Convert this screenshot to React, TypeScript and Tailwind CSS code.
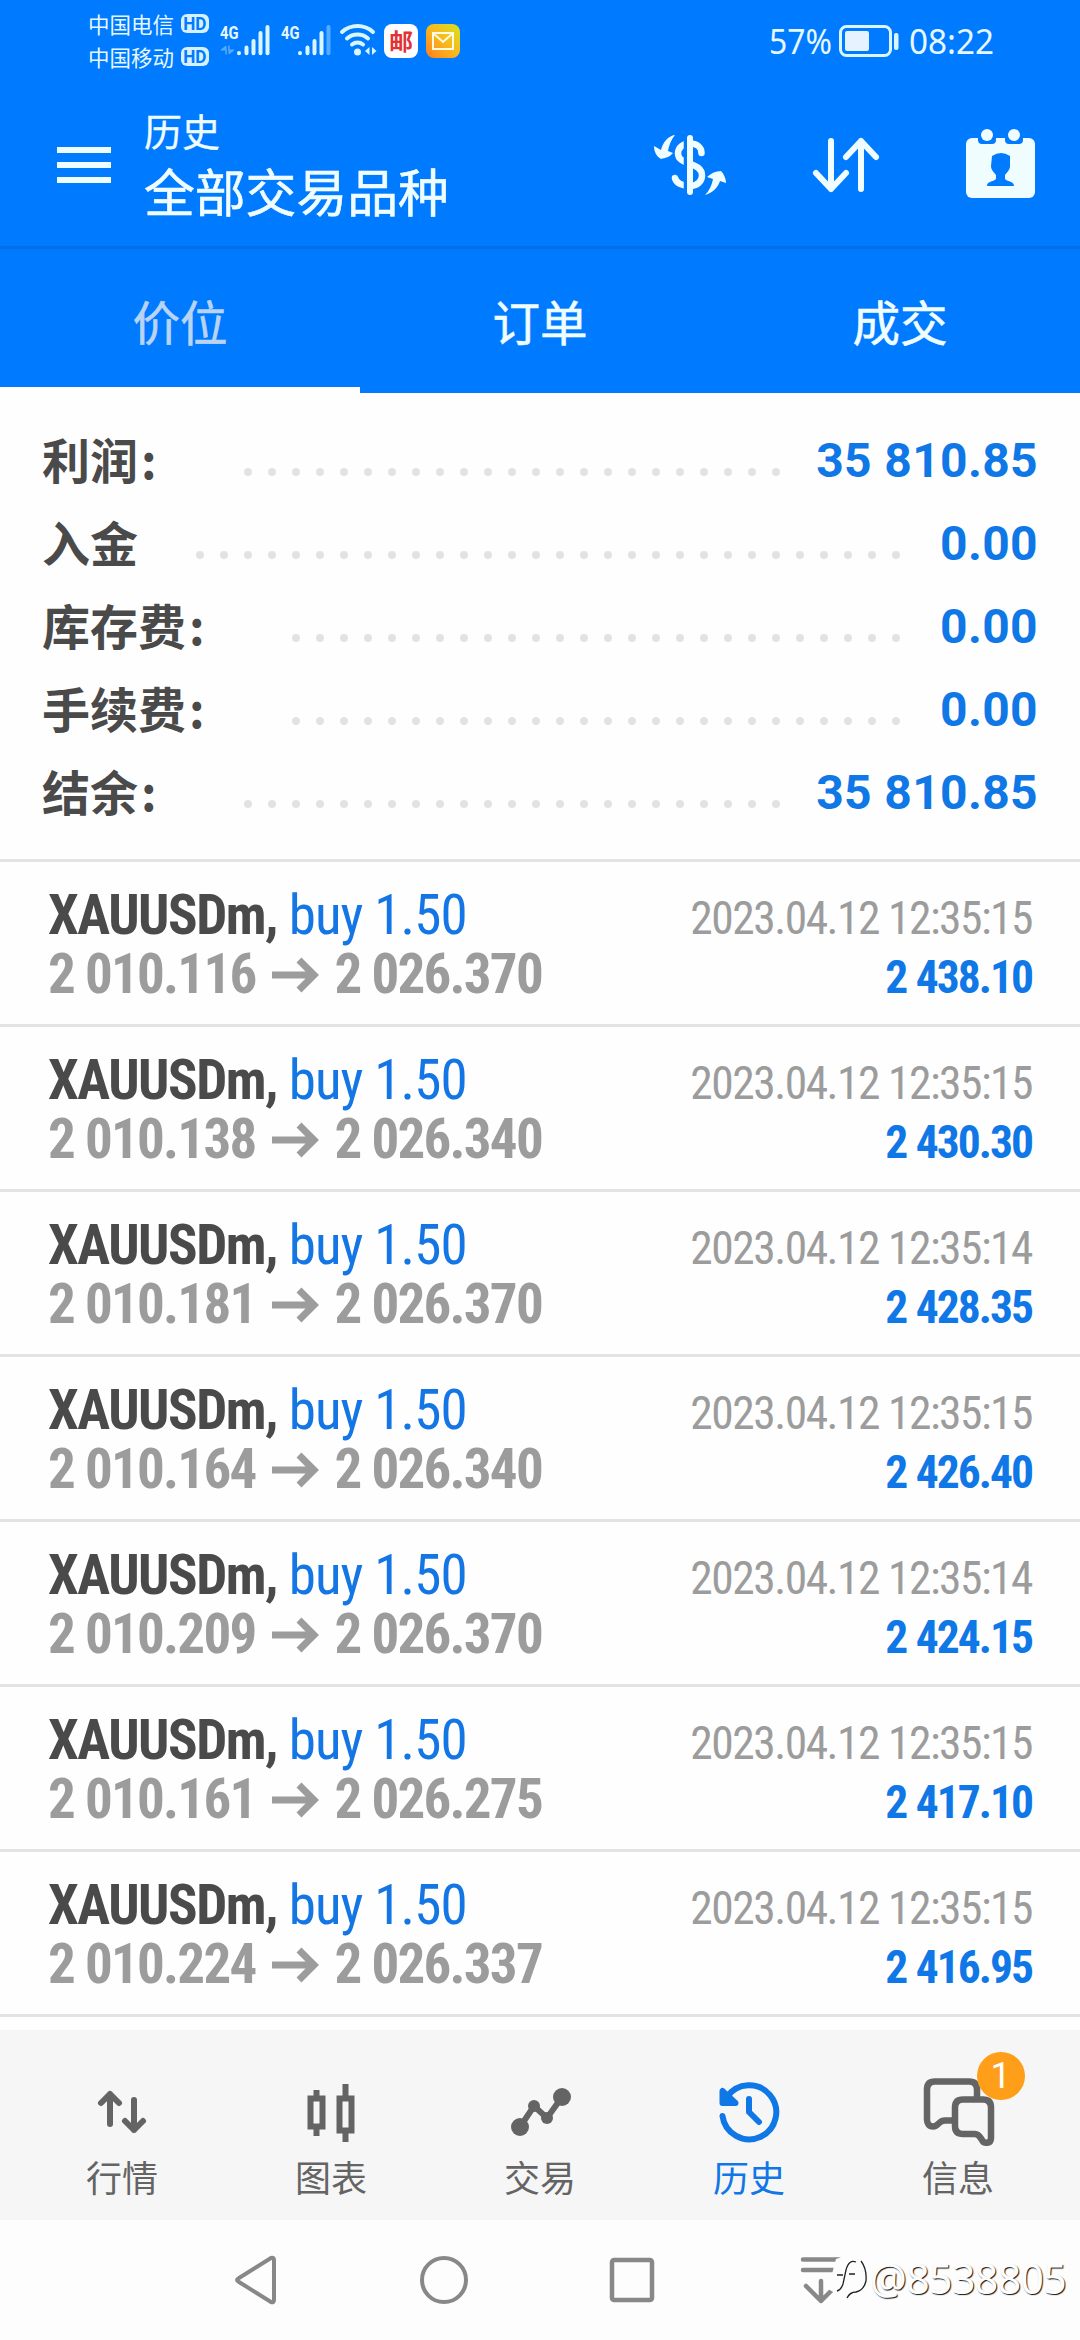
import React from "react";

const summary = [
  { label: "利润", colon: true, value: "35 810.85", dots: "w-[552px] mr-[292px]" },
  { label: "入金", colon: false, value: "0.00", dots: "w-[720px] mr-[172px]" },
  { label: "库存费", colon: true, value: "0.00", dots: "w-[624px] mr-[172px]" },
  { label: "手续费", colon: true, value: "0.00", dots: "w-[624px] mr-[172px]" },
  { label: "结余", colon: true, value: "35 810.85", dots: "w-[552px] mr-[292px]" },
];

const trades = [
  ["2 010.116", "2 026.370", "2023.04.12 12:35:15", "2 438.10"],
  ["2 010.138", "2 026.340", "2023.04.12 12:35:15", "2 430.30"],
  ["2 010.181", "2 026.370", "2023.04.12 12:35:14", "2 428.35"],
  ["2 010.164", "2 026.340", "2023.04.12 12:35:15", "2 426.40"],
  ["2 010.209", "2 026.370", "2023.04.12 12:35:14", "2 424.15"],
  ["2 010.161", "2 026.275", "2023.04.12 12:35:15", "2 417.10"],
  ["2 010.224", "2 026.337", "2023.04.12 12:35:15", "2 416.95"],
];

function Hd() {
  return (
    <span className="flex h-[19px] w-[28px] items-center justify-center rounded-[6px] bg-[#d5f1ff] font-['Roboto'] text-[19px] leading-none font-bold text-[#007aff]">
      <span className="scale-x-90">HD</span>
    </span>
  );
}

function Signal({ weak }: { weak?: boolean }) {
  return (
    <svg width="50" height="34" viewBox="0 0 50 34" fill="none" stroke="#d9f6ff" strokeWidth="4" strokeLinecap="round">
      <path d="M19 29v.2M26.500 23.500v5.700M33.500 17v12.200M40.500 9v20.200" />
      <path d="M47.500 3v26.200" opacity={weak ? 0.4 : 1} />
      {!weak && <path d="M6 30v-8l-5 4h5zM9 22v8l5-4h-5z" fill="#d9f6ff" strokeWidth="1" opacity=".4" />}
    </svg>
  );
}

function StatusBar() {
  return (
    <div className="flex h-[80px] items-start pl-[88px] text-[#e6f8ff]">
      <div className="flex w-[121px] flex-col pt-[7px] font-['Noto_Sans_CJK_SC',sans-serif] text-[21.500px] leading-[33px]">
        <div className="flex items-center justify-between whitespace-nowrap">中国电信<Hd /></div>
        <div className="flex items-center justify-between whitespace-nowrap">中国移动<Hd /></div>
      </div>
      <div className="relative ml-[11px] mt-[24px] w-[61px]">
        <span className="absolute top-0 left-0 origin-left scale-x-82 font-['Roboto'] text-[18px] leading-[18px] font-bold">4G</span>
        <Signal />
      </div>
      <div className="relative mt-[24px] w-[58px]">
        <span className="absolute top-0 left-0 origin-left scale-x-82 font-['Roboto'] text-[18px] leading-[18px] font-bold">4G</span>
        <Signal weak />
      </div>
      <svg className="mt-[22px]" width="42" height="36" viewBox="0 0 42 36" fill="none" stroke="#d9f6ff" strokeLinecap="round">
        <path d="M3 10a23 23 0 0 1 31 0M8 16.500a16 16 0 0 1 21 0M13 22.500a9 9 0 0 1 11 0" strokeWidth="4" />
        <circle cx="18.500" cy="30" r="3.500" fill="#d9f6ff" stroke="none" />
        <path d="M30.500 25v8l-4.500-4zM33 25v8l4.500-4z" fill="#d9f6ff" stroke="none" />
      </svg>
      <div className="mt-[24px] ml-[3px] flex h-[34px] w-[34px] items-center justify-center rounded-[8px] bg-white">
        <span className="-translate-y-px scale-y-95 font-['Noto_Sans_CJK_SC',sans-serif] text-[24px] leading-none font-bold text-[#e23236]">邮</span>
      </div>
      <div className="mt-[24px] ml-[8px] flex h-[34px] w-[34px] items-center justify-center rounded-[8px] bg-linear-to-tr from-[#ff7a1e] via-[#f8b81d] to-[#d2e21f]">
        <svg width="22" height="18" viewBox="0 0 22 18" fill="none" stroke="#fffbe0" strokeWidth="2"><path d="M1 1h20v16H1zM2 2l9 8 9-8" /></svg>
      </div>
      <div className="ml-auto flex items-center pt-[21px] pr-[87px] font-['Noto_Sans'] text-[35px] leading-[40px]">
        <span className="inline-block w-[67px] origin-left scale-x-91 whitespace-nowrap">57%</span>
        <svg className="ml-[3px]" width="61" height="34" viewBox="0 0 61 34" fill="none">
          <rect x="1.500" y="2.500" width="50" height="29" rx="6" stroke="#d9f6ff" strokeWidth="3" />
          <rect x="6" y="7" width="24" height="20" rx="2" fill="#e6f2ff" />
          <rect x="55" y="9" width="4.500" height="17" rx="2" fill="#d9f6ff" />
        </svg>
        <span className="ml-[9px] inline-block w-[84px] origin-left scale-x-95 whitespace-nowrap">08:22</span>
      </div>
    </div>
  );
}

function Header() {
  return (
    <header className="flex h-[166px] items-start pl-[57px] text-[#f0fdff]">
      <div className="mt-[67px] flex w-[54px] flex-col gap-[9px]">
        <i className="h-[6px] bg-current" />
        <i className="h-[6px] bg-current" />
        <i className="h-[6px] bg-current" />
      </div>
      <div className="ml-[33px] pt-[24px] whitespace-nowrap">
        <div className="text-[38px] leading-[52px] [-webkit-text-stroke:0.300px]">历史</div>
        <div className="text-[50.800px] leading-[69px] [-webkit-text-stroke:0.600px]">全部交易品种</div>
      </div>
      <div className="ml-auto flex pt-[46px] pr-[43px]">
        <svg width="76" height="76" viewBox="651 126 76 76" fill="none" stroke="currentColor" strokeLinecap="round">
          <path d="M701.500 153c0-6-5-9.500-11.500-9.500-7 0-12 4-12 10 0 12 24 8 24 22 0 6-5 10.500-12 10.500-8 0-14-3-15-8" strokeWidth="6.500" />
          <path d="M685.500 135v60" stroke="#007aff" strokeWidth="3.500" strokeLinecap="butt" />
          <path d="M690 138v54" strokeWidth="6" />
          <path d="M675 135c-7 1-12 7-14 15l-7-4c0 5 2 10 7 13 4-1 9-2 12-6l-5-2c1-6 3-11 7-16zM705 195c8-2 13-8 15-14l6 2c0-4-2-9-5-12-5 0-10 2-14 6l6 2c-1 6-4 12-8 16z" fill="currentColor" stroke="none" />
        </svg>
        <svg className="ml-[83px]" width="72" height="76" viewBox="810 126 72 76" fill="none" stroke="currentColor" strokeWidth="6" strokeLinecap="round" strokeLinejoin="round">
          <path d="M831 141v48M816 173l15 16 15-16M861 189v-48M846 157l15-16 15 16" />
        </svg>
        <svg className="ml-[84px]" width="71" height="76" viewBox="966 126 71 76">
          <rect x="966" y="138" width="69" height="60" rx="6" fill="currentColor" />
          <path d="M978 136h18v4q0 4-4 4h-10q-4 0-4-4zM1005 136h18v4q0 4-4 4h-10q-4 0-4-4z" fill="#007aff" />
          <circle cx="987" cy="135" r="6" fill="currentColor" />
          <circle cx="1014" cy="135" r="6" fill="currentColor" />
          <path d="M992 156q9-6 18 0v10c0 4-3 6-5 9v4c3 3 9 2 9 7h-27c0-5 6-4 9-7v-4c-2-3-5-5-5-9z" fill="#007aff" />
        </svg>
      </div>
    </header>
  );
}

function Tabs() {
  return (
    <div className="grid h-[147px] grid-cols-3 border-t-[3px] border-[#006fe8] text-center text-[47.500px] leading-[143px] text-[#f0fdff] [-webkit-text-stroke:0.600px]">
      <div className="h-[144px] border-b-[6px] border-white text-[#b9d3f3]"><span className="block h-[138px]">价位</span></div>
      <div>订单</div>
      <div>成交</div>
    </div>
  );
}

function TradeRow({ row }: { row: string[] }) {
  return (
    <div className="flex h-[165px] justify-between border-b-[3px] border-[#e3e3e3] pt-[24px] pr-[48px] pl-[48px] font-['Roboto'] font-stretch-75%">
      <div className="flex flex-col whitespace-nowrap text-[55px] leading-[59px]">
        <div className="tracking-[-0.900px] text-[#1476e4]"><b className="tracking-[-1.500px] text-[#4a4a4a]">XAUUSDm,</b> buy 1.50</div>
        <div className="flex items-center font-bold tracking-[-1.750px] text-[#9c9c9c]">
          {row[0]}
          <svg className="mr-[14px] ml-[17px]" width="48" height="36" viewBox="0 0 48 36" fill="none" stroke="currentColor" strokeWidth="7"><path d="M0 18h43M27 3l15 15-15 15" /></svg>
          {row[1]}
        </div>
      </div>
      <div className="flex flex-col items-end pt-[3px] whitespace-nowrap text-[45.500px] leading-[59px]">
        <div className="tracking-[-1.500px] text-[#9c9c9c]">{row[2]}</div>
        <div className="font-bold tracking-[-2px] text-[#0f77e6] [word-spacing:1px]">{row[3]}</div>
      </div>
    </div>
  );
}

const navItems = [
  {
    label: "行情",
    icon: <g fill="none" stroke="currentColor" strokeWidth="6" strokeLinecap="round" strokeLinejoin="round"><path d="M-12 12v-30M-21-9l9-9 9 9M12-12v30M3 9l9 9 9-9" /></g>,
  },
  {
    label: "图表",
    icon: <g fill="none" stroke="currentColor" strokeWidth="6"><path d="M-20.500-13.500h12v28h-12zM-14.500-22v6M-14.500 16v8M8.500-13.500h12v32h-12zM14.500-28v12M14.500 20v10" /></g>,
  },
  {
    label: "交易",
    icon: <g fill="currentColor" stroke="currentColor"><path d="M-20 15l14-21 13 12L22-15" fill="none" strokeWidth="6" /><circle cx="-20" cy="15" r="9" stroke="none" /><circle cx="-6" cy="-6" r="6" stroke="none" /><circle cx="7" cy="6" r="6" stroke="none" /><circle cx="22" cy="-15" r="9" stroke="none" /></g>,
  },
  {
    label: "历史",
    active: true,
    icon: <g fill="none" stroke="currentColor" strokeWidth="6" strokeLinecap="round" strokeLinejoin="round"><path d="M-26.500 4A27 27 0 1 0-22-15M-26.500-21v12h13zM0-13V0l10 10" /><path d="M-26-19v10h12z" fill="currentColor" strokeWidth="3" /></g>,
  },
  {
    label: "信息",
    badge: "1",
    icon: <g fill="none" stroke="currentColor" strokeWidth="6.500" strokeLinejoin="round" strokeLinecap="round"><path d="M-5 8.500h-8c-7 0-6 6-12 6-4 0-6-3-6-7v-30q0-8 8-8h34q8 0 8 8v7" /><path d="M5-12.500h20q8 0 8 8V26c0 6-7 6-9 2-2-3-3-6-7-6H5q-8 0-8-8V-4.500q0-8 8-8z" /></g>,
  },
];

export default function App() {
  return (
    <div className="flex h-[2340px] w-[1080px] flex-col overflow-hidden bg-[#fefefe] font-['Noto_Sans_CJK_SC',sans-serif]">
      <div className="bg-[#007aff]">
        <StatusBar />
        <Header />
        <Tabs />
      </div>
      <section className="flex h-[469px] flex-col border-b-[3px] border-[#e3e3e3] pt-[26px] pl-[42px]">
        {summary.map((s) => (
          <div key={s.label} className="relative flex h-[83px] items-center text-[48px] leading-[83px] font-bold text-[#4a4a4a]">
            <span className="-translate-y-[2px]">{s.label}{s.colon && <span className="ml-[3px]">:</span>}</span>
            <span className={`ml-auto h-[24px] translate-y-[11px] bg-[radial-gradient(circle,#e2e2e2_3.500px,transparent_4.500px)] bg-[length:24px_24px] ${s.dots}`} />
            <span className="absolute right-[42px] font-['Roboto'] tracking-[0.350px] text-[#0f77e6]">{s.value}</span>
          </div>
        ))}
      </section>
      <main className="h-[1168px]">
        {trades.map((t) => <TradeRow key={t[3]} row={t} />)}
      </main>
      <nav className="grid h-[190px] grid-cols-5 bg-[#f6f6f6] px-[17.500px]">
        {navItems.map((n) => (
          <div key={n.label} className={`relative flex flex-col items-center pt-[42px] ${n.active ? "text-[#0f77e6]" : "text-[#646464]"}`}>
            <svg width="80" height="80" viewBox="-40 -40 80 80">{n.icon}</svg>
            <span className="text-[36px] leading-[48px]">{n.label}</span>
            {n.badge && <span className="absolute top-[22px] left-[123px] flex h-[48px] w-[48px] items-center justify-center rounded-full bg-[#ff9e18] font-['Roboto'] text-[36px] leading-none text-white">{n.badge}</span>}
          </div>
        ))}
      </nav>
      <footer className="relative flex h-[120px] items-center bg-[#fdfdfd] pl-[230px] text-[#888]">
        <svg width="50" height="54" viewBox="230 2253 50 54" fill="none" stroke="currentColor" strokeWidth="4" strokeLinejoin="round"><path d="M237 2280q0-1 2-2l32-20q3-1 3 2v40q0 3-3 2l-32-20q-2-1-2-2z" /></svg>
        <svg className="ml-[137px]" width="54" height="54" viewBox="-27 -27 54 54" fill="none" stroke="currentColor" strokeWidth="4"><circle r="22" /></svg>
        <svg className="ml-[136px]" width="50" height="54" viewBox="-25 -27 50 54" fill="none" stroke="currentColor" strokeWidth="4.500"><rect x="-20" y="-20" width="40" height="40" rx="2" /></svg>
        <svg className="ml-[140px]" width="50" height="54" viewBox="797 2253 50 54" fill="none" stroke="currentColor" strokeWidth="4.500" strokeLinecap="round" strokeLinejoin="round"><path d="M803 2259.500h36M803 2270h36M821 2281v20M806 2286l15 15 15-15" /></svg>
        <div className="absolute top-[28px] left-[828px] flex items-center font-['Noto_Sans'] text-[41px] leading-[60px] tracking-[-0.600px] text-[#fdfdfd] [text-shadow:1px_1px_1px_#111]">
          <svg className="mr-[2px]" width="40" height="46" viewBox="0 0 40 46"><path d="M8 4Q22-2 34 6q6 10 0 28Q26 42 14 42L0 34z" fill="#fdfdfd" /><path d="M9 36q4-1 6-7l3-14q3-11 10-8M9 20h6M21 19h6M33 6q6 8 5 20-2 9-10 11-6 0-9 6" fill="none" stroke="#222" strokeWidth="1.300" /></svg>
          @8538805
        </div>
      </footer>
    </div>
  );
}
